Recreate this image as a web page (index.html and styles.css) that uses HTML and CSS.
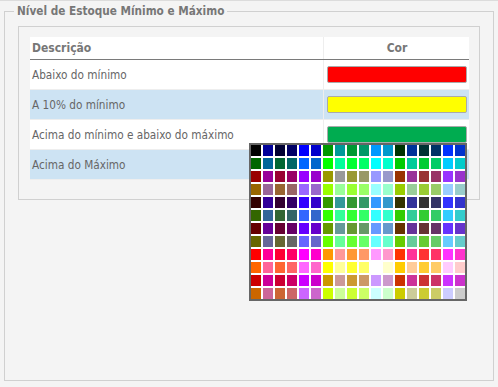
FILE: index.html
```html
<!DOCTYPE html>
<html lang="pt-BR">
<head>
    <meta charset="UTF-8">
    <meta name="viewport" content="width=device-width, initial-scale=1.0">
    <title>Nível de Estoque</title>
    <link rel="stylesheet" href="styles.css">
</head>
<body>
    <div class="page">
        <fieldset class="group">
            <legend>Nível de Estoque Mínimo e Máximo</legend>
            <div class="inner-box">
                <table class="levels">
                    <thead>
                        <tr>
                            <th class="col-desc">Descrição</th>
                            <th class="col-color">Cor</th>
                        </tr>
                    </thead>
                    <tbody>
                        <tr>
                            <td>Abaixo do mínimo</td>
                            <td class="col-color"><div class="color-box red"></div></td>
                        </tr>
                        <tr class="alt">
                            <td>A 10% do mínimo</td>
                            <td class="col-color"><div class="color-box yellow"></div></td>
                        </tr>
                        <tr>
                            <td>Acima do mínimo e abaixo do máximo</td>
                            <td class="col-color">
                                <div class="color-wrap">
                                    <div class="color-box green"></div>
                                    <div class="picker" id="picker"></div>
                                </div>
                            </td>
                        </tr>
                        <tr class="alt">
                            <td>Acima do Máximo</td>
                            <td class="col-color"><div class="color-box blue"></div></td>
                        </tr>
                    </tbody>
                </table>
            </div>
        </fieldset>
    </div>
    <script>
        const steps = ["00", "99", "33", "66", "FF", "CC"];

        function buildPicker() {
            const picker = document.getElementById("picker");
            steps.forEach(r => {
                [steps.slice(0, 3), steps.slice(3)].forEach(greens => {
                    greens.forEach(g => {
                        steps.forEach(b => {
                            const cell = document.createElement("span");
                            cell.className = "swatch";
                            cell.style.background = "#" + r + g + b;
                            picker.appendChild(cell);
                        });
                    });
                });
            });
        }

        buildPicker();
    </script>
</body>
</html>
```

FILE: styles.css
```css
html, body {
    margin: 0;
    height: 100%;
}
body {
    background: #f4f4f4;
    font-family: "DejaVu Sans Condensed", "DejaVu Sans", sans-serif;
    font-stretch: condensed;
    font-size: 11.7px;
    color: #666;
}
.page {
    box-sizing: border-box;
    height: 100%;
    border-top: 1px solid #dcdcdc;
    padding: 3px 4px 6px 4px;
    display: flex;
    flex-direction: column;
}
.group {
    flex: 1;
    margin: 0;
    border: 1px solid #d0d0d0;
    padding: 8px 13px 13px 13px;
    min-width: 0;
}
.group legend {
    margin-left: -4px;
    padding: 0 3px;
    font-weight: bold;
    font-size: 11.7px;
    line-height: 14px;
    color: #777;
}
.inner-box {
    border: 1px solid #d0d0d0;
    padding: 10px 10px 19px 11px;
}
.levels {
    width: 100%;
    border-collapse: collapse;
}
.levels th {
    background: #fff;
    height: 22px;
    padding: 0 2px;
    text-align: left;
    font-size: 12px;
    color: #777;
    border-bottom: 1px solid #7a7a7a;
}
.levels th.col-color {
    text-align: center;
}
.levels td {
    height: 29px;
    padding: 0 2px;
    background: #fff;
    border-bottom: 1px solid #eee;
}
.levels tr.alt td {
    background: #cde3f3;
}
.levels .col-color {
    width: 140px;
    padding: 0 2px 0 3px;
    border-left: 1px solid #eee;
}
.color-wrap {
    position: relative;
}
.color-box {
    height: 15px;
    border: 1px solid #aaa;
    border-radius: 2px;
}
.red { background: #ff0000; }
.yellow { background: #ffff00; }
.green { background: #00ac50; }
.blue { background: #0066cc; }
.picker {
    position: absolute;
    top: 100%;
    right: 0;
    z-index: 2;
    display: grid;
    grid-template-columns: repeat(18, 10px);
    grid-auto-rows: 11px;
    gap: 2px;
    border: 2px solid #666;
    background: #fff;
}
.swatch {
    display: block;
}
```
